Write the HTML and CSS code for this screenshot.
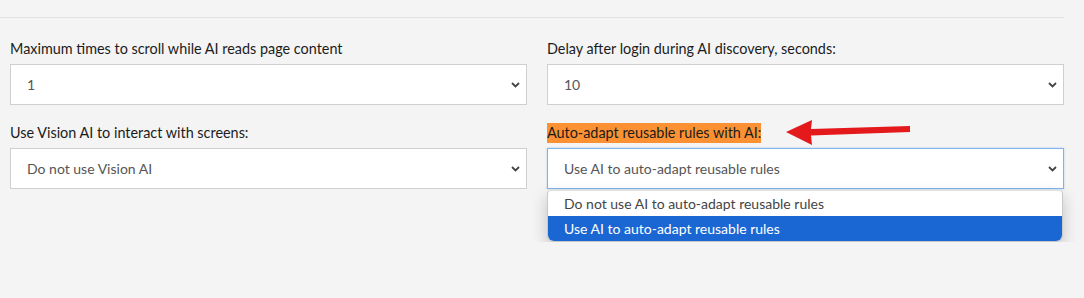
FILE: index.html
```html
<!DOCTYPE html>
<html lang="en">
<head>
    <meta charset="UTF-8">
    <title>AI settings</title>
    <link rel="stylesheet" href="styles.css">
</head>
<body>
    <div class="divider"></div>
    <div class="settings">
        <div class="field">
            <label class="field-label">Maximum times to scroll while AI reads page content</label>
            <div class="select">
                <span>1</span>
                <svg class="chevron" width="9" height="6" viewBox="0 0 9 6"><path d="M1 1 L4.5 4.5 L8 1" fill="none" stroke="#444" stroke-width="1.8"/></svg>
            </div>
        </div>
        <div class="field">
            <label class="field-label">Delay after login during AI discovery, seconds:</label>
            <div class="select">
                <span>10</span>
                <svg class="chevron" width="9" height="6" viewBox="0 0 9 6"><path d="M1 1 L4.5 4.5 L8 1" fill="none" stroke="#444" stroke-width="1.8"/></svg>
            </div>
        </div>
        <div class="field">
            <label class="field-label">Use Vision AI to interact with screens:</label>
            <div class="select">
                <span>Do not use Vision AI</span>
                <svg class="chevron" width="9" height="6" viewBox="0 0 9 6"><path d="M1 1 L4.5 4.5 L8 1" fill="none" stroke="#444" stroke-width="1.8"/></svg>
            </div>
        </div>
        <div class="field">
            <div class="label-row">
                <label class="field-label highlight">Auto-adapt reusable rules with AI:</label>
                <svg class="arrow" width="126" height="28" viewBox="0 0 126 28"><path d="M0 12 L26 0 L25 9 L124 6 L124 12 L25 15.5 L26 25 Z" fill="#e3191c"/></svg>
            </div>
            <div class="select focused">
                <span>Use AI to auto-adapt reusable rules</span>
                <svg class="chevron" width="9" height="6" viewBox="0 0 9 6"><path d="M1 1 L4.5 4.5 L8 1" fill="none" stroke="#444" stroke-width="1.8"/></svg>
            </div>
            <ul class="options">
                <li>Do not use AI to auto-adapt reusable rules</li>
                <li class="selected">Use AI to auto-adapt reusable rules</li>
            </ul>
        </div>
    </div>
</body>
</html>
```

FILE: styles.css
```css
body {
    margin: 0;
    background-color: #f4f4f4;
    font-family: Lato, "Open Sans", sans-serif;
    color: #1c1c1c;
}
.divider {
    height: 17px;
    width: 1064px;
    border-bottom: 1px solid #e2e2e2;
}
.settings {
    display: grid;
    grid-template-columns: 517px 517px;
    column-gap: 20px;
    row-gap: 17px;
    padding: 20px 0 0 10px;
    align-items: start;
}
.field {
    display: flex;
    flex-direction: column;
}
.field-label {
    font-size: 14.4px;
    line-height: 20px;
    padding-top: 1px;
    margin-bottom: 5px;
}
.label-row {
    display: flex;
    align-items: center;
    height: 21px;
    margin-bottom: 5px;
}
.label-row .field-label {
    margin-bottom: 0;
    padding-top: 0;
    margin-top: 1px;
}
.highlight {
    background-color: #fb9132;
}
.arrow {
    margin-left: 25px;
    margin-top: 2px;
}
.select {
    height: 41px;
    box-sizing: border-box;
    background: #fff;
    border: 1px solid #cfcfcf;
    display: flex;
    align-items: center;
    justify-content: space-between;
    padding: 0 6px 0 16px;
    font-size: 14px;
    color: #555;
}
.select.focused {
    border-color: #7fb4ea;
    box-shadow: 0 0 2px rgba(100, 160, 230, 0.4);
}
.options {
    margin: 1px 1px 0 0;
    padding: 0;
    list-style: none;
    background: #fff;
    border: 1px solid #c8c8c8;
    border-top-color: #e0e0e0;
    border-radius: 4px 4px 7px 7px;
    overflow: hidden;
    box-shadow: 0 6px 16px rgba(0, 0, 0, 0.2);
    color: #444;
    font-size: 14px;
}
.options li {
    height: 25px;
    line-height: 25px;
    padding-left: 16px;
}
.options .selected {
    background-color: #1a67d3;
    color: #fff;
}
```
